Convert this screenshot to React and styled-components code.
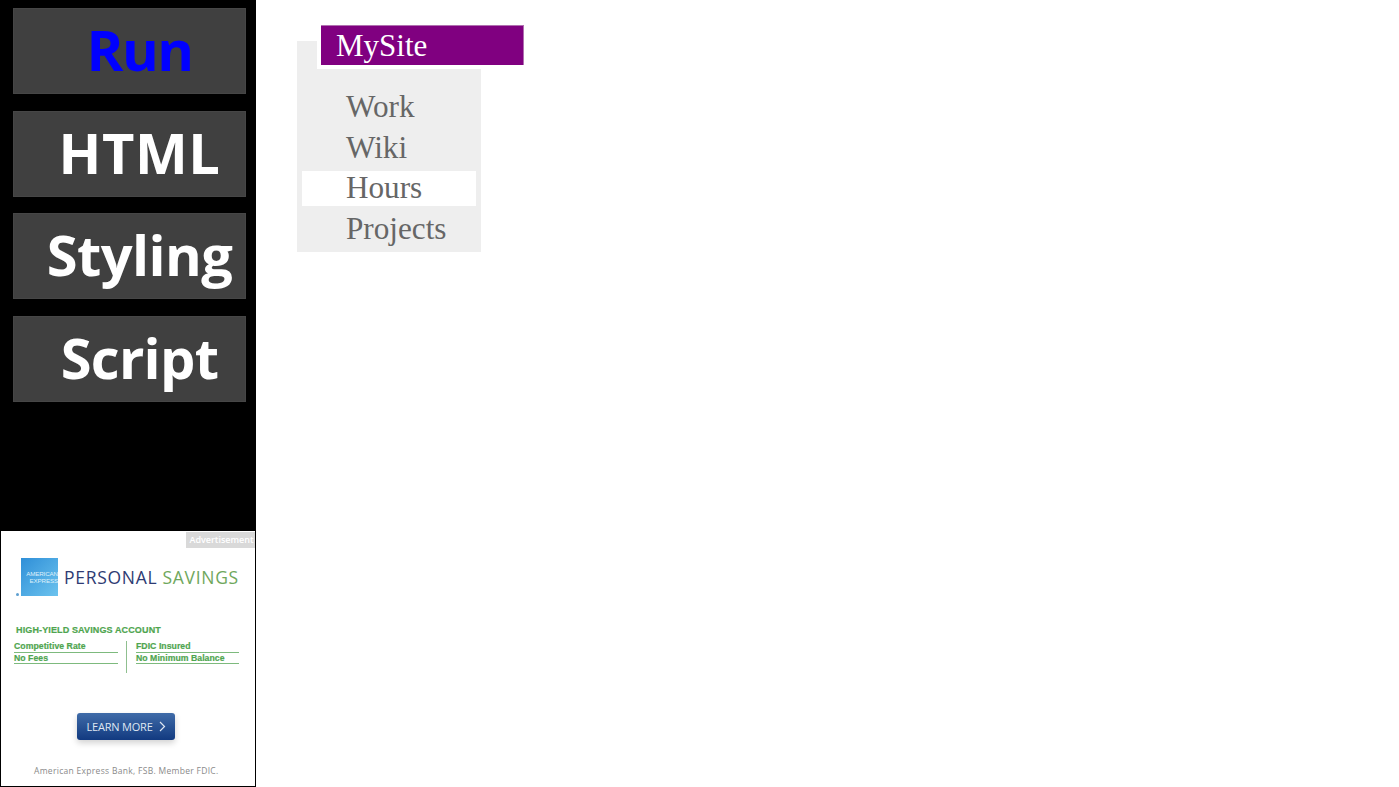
import React from "react";
import styled, { createGlobalStyle } from "styled-components";

const Global = createGlobalStyle`
  html, body { margin: 0; padding: 0; background: #fff; }
  body { font-family: "Liberation Serif", serif; overflow: hidden; }
`;
const Page = styled.div`
  display: flex;
  width: 1399px;
  height: 787px;
  overflow: hidden;
`;
const Sidebar = styled.aside`
  width: 256px;
  height: 787px;
  background: #000;
  display: flex;
  flex-direction: column;
  flex: none;
`;
const ButtonStack = styled.div`
  height: 531px;
  box-sizing: border-box;
  padding: 8px 10px 0 13px;
  display: flex;
  flex-direction: column;
  gap: 16.5px;
`;
const ActionButton = styled.button`
  width: 233px;
  height: 86px;
  padding: 0 0 3px 20px;
  border: 1px solid #464646;
  background: #404040;
  color: ${(p) => (p.$active ? "#0000ff" : "#fff")};
  font: 700 56px/79px "Open Sans", sans-serif;
  letter-spacing: ${(p) => p.$track ?? -0.6}px;
  text-align: center;
  white-space: nowrap;
  display: block;
  box-sizing: border-box;
`;
const Ad = styled.div`
  position: relative;
  flex: 1;
  background: #fff;
  border: 1px solid #000;
  border-top: 0;
  box-sizing: border-box;
  font-family: "Liberation Sans", sans-serif;
  display: flex;
  flex-direction: column;
`;
const AdTag = styled.div`
  position: absolute;
  top: 1px;
  right: 0;
  width: 69px;
  height: 16px;
  background: #d9d9d9;
  color: #fff;
  font: 600 9px/16px "Open Sans", sans-serif;
  text-align: center;
  padding-left: 2px;
  box-sizing: border-box;
`;
const Brand = styled.div`
  display: flex;
  align-items: center;
  padding: 27px 0 0 20px;
  gap: 6px;
`;
const BrandLogo = styled.div`
  position: relative;
  width: 37px;
  height: 38px;
  background: linear-gradient(135deg, #2f8fd8, #6cc3ee);
  color: #dff1fb;
  font: 400 6.2px/7.5px "Liberation Sans", sans-serif;
  letter-spacing: -0.1px;
  display: flex;
  flex-direction: column;
  justify-content: center;
  align-items: flex-end;
  box-sizing: border-box;
  white-space: nowrap;
  &::after {
    content: "";
    position: absolute;
    left: -5px;
    bottom: 0;
    width: 3px;
    height: 3px;
    border-radius: 50%;
    background: #5d9fd0;
  }
`;
const BrandName = styled.div`
  font: 400 17.5px/22px "Open Sans", sans-serif;
  letter-spacing: 0.7px;
  color: #2e3b73;
  white-space: nowrap;
  span { color: #6fa75c; }
`;
const Headline = styled.div`
  margin: 28px 0 0 15px;
  font: 700 9px/12px "Liberation Sans", sans-serif;
  letter-spacing: 0.13px;
  -webkit-text-stroke: 0.2px #4fa54f;
  color: #4fa54f;
  white-space: nowrap;
`;
const Features = styled.div`
  display: flex;
  margin: 5px 0 0 13px;
`;
const FeatureCol = styled.div`
  width: 104px;
  display: flex;
  flex-direction: column;
  &:last-child {
    margin-left: 8px;
    border-left: 1px solid #8fbf8f;
    padding-left: 9px;
    height: 32px;
    width: 103px;
  }
`;
const Feature = styled.div`
  height: 11.5px;
  box-sizing: border-box;
  font: 700 8.7px/10px "Liberation Sans", sans-serif;
  letter-spacing: 0.04px;
  -webkit-text-stroke: 0.2px #4fa54f;
  color: #4fa54f;
  border-bottom: 1px solid #7dba7d;
  white-space: nowrap;
`;
const Learn = styled.div`
  align-self: flex-start;
  margin: 40px 0 0 76px;
  width: 98px;
  height: 27px;
  padding-bottom: 1px;
  box-sizing: border-box;
  border-radius: 3px;
  background: linear-gradient(#3f6ba8, #123a80);
  box-shadow: 0 3px 6px rgba(0, 0, 0, 0.18);
  color: #dfe7f2;
  font: 400 11px/25px "Open Sans", sans-serif;
  letter-spacing: -0.2px;
  display: flex;
  align-items: center;
  justify-content: center;
  gap: 6px;
`;
const Legal = styled.div`
  margin: 25px 0 0 33px;
  font: 400 8.5px/11px "Open Sans", sans-serif;
  letter-spacing: 0.3px;
  color: #8a8a8a;
  white-space: nowrap;
`;
const Main = styled.main`
  flex: 1;
  padding: 41px 0 0 41px;
`;
const SiteCard = styled.div`
  position: relative;
  width: 184px;
  height: 211px;
  background: #eee;
  box-sizing: border-box;
  padding: 49px 5px 0;
`;
const Logo = styled.div`
  position: absolute;
  left: 24px;
  top: -16px;
  width: 203px;
  height: 40px;
  padding-left: 15px;
  box-sizing: border-box;
  background: #800080;
  border-top: 1px solid #b070b0;
  border-right: 1px solid #b070b0;
  color: #fff;
  font: 400 31px/40px "Liberation Serif", serif;
  box-shadow: -4px 4px 0 #fff;
`;
const NavList = styled.ul`
  list-style: none;
  margin: 0;
  padding: 0;
  display: flex;
  flex-direction: column;
  gap: 5.5px;
`;
const NavItem = styled.li`
  height: 35px;
  padding-left: 44px;
  background: ${(p) => (p.$active ? "#fff" : "transparent")};
  color: #666;
  font: 400 31.2px/33px "Liberation Serif", serif;
`;

export default function App() {
  return (
    <Page>
      <Global />
      <Sidebar>
        <ButtonStack>
          <ActionButton $active $track={-1.6}>Run</ActionButton>
          <ActionButton $track={0.6}>HTML</ActionButton>
          <ActionButton>Styling</ActionButton>
          <ActionButton $track={-0.7}>Script</ActionButton>
        </ButtonStack>
        <Ad>
          <AdTag>Advertisement</AdTag>
          <Brand>
            <BrandLogo>
              <span>AMERICAN</span>
              <span>EXPRESS</span>
            </BrandLogo>
            <BrandName>
              PERSONAL <span>SAVINGS</span>
            </BrandName>
          </Brand>
          <Headline>HIGH-YIELD SAVINGS ACCOUNT</Headline>
          <Features>
            <FeatureCol>
              <Feature>Competitive Rate</Feature>
              <Feature>No Fees</Feature>
            </FeatureCol>
            <FeatureCol>
              <Feature>FDIC Insured</Feature>
              <Feature>No Minimum Balance</Feature>
            </FeatureCol>
          </Features>
          <Learn>
            LEARN MORE
            <svg width="7" height="11" viewBox="0 0 7 11" fill="none" stroke="#dfe7f2" strokeWidth="1.2">
              <path d="M1 1l4.5 4.5L1 10" />
            </svg>
          </Learn>
          <Legal>American Express Bank, FSB. Member FDIC.</Legal>
        </Ad>
      </Sidebar>
      <Main>
        <SiteCard>
          <Logo>MySite</Logo>
          <NavList>
            <NavItem>Work</NavItem>
            <NavItem>Wiki</NavItem>
            <NavItem $active>Hours</NavItem>
            <NavItem>Projects</NavItem>
          </NavList>
        </SiteCard>
      </Main>
    </Page>
  );
}
